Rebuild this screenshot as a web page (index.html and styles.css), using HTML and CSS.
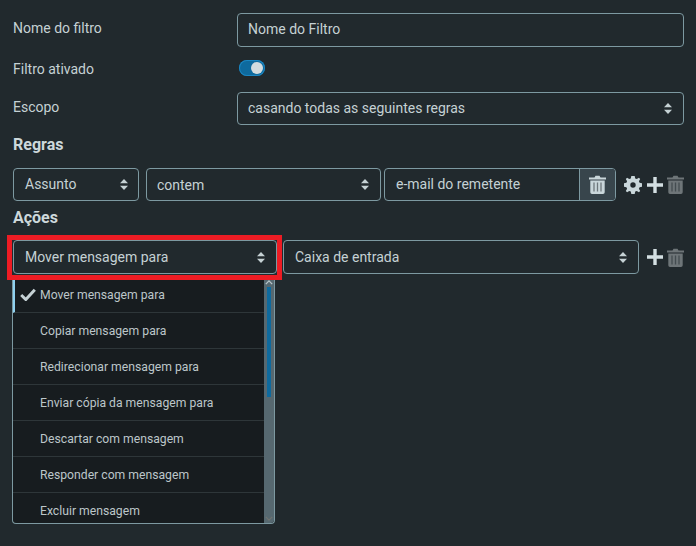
FILE: index.html
```
<!DOCTYPE html>
<html lang="pt">
<head>
<meta charset="utf-8">
<title>Filtro</title>
<link rel="stylesheet" href="styles.css">
</head>
<body>
<svg class="defs" width="0" height="0">
  <symbol id="updown" viewBox="0 0 8 11"><path d="M4 0 8 4.200H0ZM4 11 0 6.800H8Z" fill="currentColor"/></symbol>
  <symbol id="trash" viewBox="0 0 17 19"><path d="M0 2.500H5.500L6.500 .8H10.500L11.500 2.500H17V4.500H0ZM1.300 5.500H15.700V17.200Q15.700 19 14 19H3Q1.300 19 1.300 17.200Z" fill="currentColor"/><path d="M5 7.500V16.500M8.500 7.500V16.500M12 7.500V16.500" stroke="#222a2f" stroke-opacity=".55" stroke-width="1.300" fill="none"/></symbol>
  <symbol id="plus" viewBox="0 0 16 16"><path d="M6.300 0H9.700V6.300H16V9.700H9.700V16H6.300V9.700H0V6.300H6.300Z" fill="currentColor"/></symbol>
  <symbol id="gear" viewBox="0 0 18 18"><path fill-rule="evenodd" d="M7.300 0H10.700L11.200 2.400 12.800 3.100 14.900 1.800 16.200 3.100 14.900 5.200 15.600 6.800 18 7.300V10.700L15.600 11.200 14.900 12.800 16.200 14.900 14.900 16.200 12.800 14.900 11.200 15.600 10.700 18H7.300L6.800 15.600 5.200 14.900 3.100 16.200 1.800 14.900 3.100 12.800 2.400 11.200 0 10.700V7.300L2.400 6.800 3.100 5.200 1.800 3.100 3.100 1.800 5.200 3.100 6.800 2.400ZM9 6.300A2.700 2.700 0 1 0 9 11.700 2.700 2.700 0 1 0 9 6.300Z" fill="currentColor"/></symbol>
</svg>

<main class="form">
  <div class="row row-name">
    <label class="label">Nome do filtro</label>
    <div class="field field-tall">Nome do Filtro</div>
  </div>
  <div class="row row-toggle">
    <label class="label">Filtro ativado</label>
    <span class="toggle"><span class="knob"></span></span>
  </div>
  <div class="row row-scope">
    <label class="label">Escopo</label>
    <div class="field select">casando todas as seguintes regras<svg class="arrow"><use href="#updown"/></svg></div>
  </div>

  <h2 class="heading">Regras</h2>
  <div class="line">
    <div class="field select w-subject">Assunto<svg class="arrow"><use href="#updown"/></svg></div>
    <div class="field select w-op">contem<svg class="arrow"><use href="#updown"/></svg></div>
    <div class="group">
      <div class="group-text">e-mail do remetente</div>
      <div class="group-btn"><svg class="icon-trash light"><use href="#trash"/></svg></div>
    </div>
    <div class="icons">
      <svg class="icon-gear"><use href="#gear"/></svg>
      <svg class="icon-plus"><use href="#plus"/></svg>
      <svg class="icon-trash muted"><use href="#trash"/></svg>
    </div>
  </div>

  <h2 class="heading heading-actions">Ações</h2>
  <div class="line line-action">
    <div class="highlight">
      <div class="field select w-action">Mover mensagem para<svg class="arrow"><use href="#updown"/></svg></div>
    </div>
    <div class="field select w-folder">Caixa de entrada<svg class="arrow"><use href="#updown"/></svg></div>
    <div class="icons icons-action">
      <svg class="icon-plus"><use href="#plus"/></svg>
      <svg class="icon-trash muted"><use href="#trash"/></svg>
    </div>

    <div class="menu">
      <ul class="menu-list">
        <li class="menu-item active"><svg class="check" viewBox="0 0 16 13"><path d="M1.200 7 5.800 11.500 14.800 1.800" fill="none" stroke="currentColor" stroke-width="3"/></svg>Mover mensagem para</li>
        <li class="menu-item">Copiar mensagem para</li>
        <li class="menu-item">Redirecionar mensagem para</li>
        <li class="menu-item">Enviar cópia da mensagem para</li>
        <li class="menu-item">Descartar com mensagem</li>
        <li class="menu-item">Responder com mensagem</li>
        <li class="menu-item">Excluir mensagem</li>
      </ul>
      <div class="scrollbar">
        <svg class="chev" viewBox="0 0 10 6"><path d="M1 5 5 1 9 5" fill="none" stroke="#b9c6ca" stroke-width="1.600"/></svg>
        <div class="thumb"></div>
        <svg class="chev chev-down" viewBox="0 0 10 6"><path d="M1 1 5 5 9 1" fill="none" stroke="#6f7371" stroke-width="1.600"/></svg>
      </div>
    </div>
  </div>
</main>
</body>
</html>
```
FILE: styles.css
```
* { box-sizing: border-box; }
html, body { margin: 0; height: 100%; }
body {
  background: #21292d;
  color: #c5d1d4;
  font: 14px/20px Roboto, "Liberation Sans", sans-serif;
  overflow: hidden;
}
.defs { position: absolute; }
.form { padding: 13px 12px 0 13px; }
.row { display: flex; align-items: flex-start; }
.label { width: 224px; flex: none; }
.row-name { height: 47px; }
.row-name .label { padding-top: 5px; }
.row-toggle { height: 32px; }
.row-toggle .label { line-height: 18px; }
.row-scope { height: 33px; }
.row-scope .label { padding-top: 5px; }
.field {
  position: relative;
  display: flex;
  align-items: center;
  height: 33px;
  padding: 0 11px;
  border: 1px solid #7d99a1;
  border-radius: 4px;
  background: #21292d;
  white-space: nowrap;
}
.row .field { flex: 1; padding-left: 10px; padding-bottom: 1px; }
.row .field-tall { height: 34px; padding-bottom: 2px; }
.arrow {
  position: absolute;
  right: 11px;
  top: 50%;
  width: 8px;
  height: 11px;
  margin-top: -5.500px;
  color: #c5d1d4;
}
.toggle {
  display: flex;
  align-items: center;
  justify-content: flex-end;
  width: 26px;
  height: 16px;
  margin-left: 2px;
  padding-right: 2px;
  border-radius: 8px;
  background: #0e6a9e;
  box-shadow: inset 0 0 0 1px #1b86c2;
}
.knob { width: 12px; height: 12px; border-radius: 50%; background: #d3dcdf; }
.heading {
  margin: 0;
  font-size: 16px;
  font-weight: 700;
  line-height: 20px;
  color: #cdd8db;
  padding-top: 10px;
  height: 43px;
}
.heading-actions { height: 39px; padding-top: 7px; }
.line { position: relative; display: flex; gap: 7px; align-items: flex-start; height: 33px; }
.line .w-subject { width: 126px; flex: none; padding-bottom: 1px; }
.w-subject .arrow { right: 10px; }
.line .w-op { width: 235px; flex: none; margin-right: -4px; padding-left: 10px; padding-top: 1px; }
.group {
  display: flex;
  width: 232px;
  height: 33px;
  flex: none;
  border: 1px solid #7d99a1;
  border-radius: 4px;
  overflow: hidden;
}
.group-text { flex: 1; padding: 0 11px; line-height: 31px; }
.group-btn {
  display: flex;
  align-items: center;
  justify-content: center;
  width: 36px;
  border-left: 1px solid #7d99a1;
  background: #38454c;
}
.icons { display: flex; align-items: center; height: 33px; margin-left: 1px; }
.icon-trash { width: 17px; height: 19px; }
.light { color: #c9d6da; }
.muted { color: #6e7578; }
.icon-gear { width: 18px; height: 18px; color: #c9d6da; }
.icon-plus { width: 16px; height: 16px; margin: 0 4px 0 5px; color: #d4dfe2; }
.line-action { height: 34px; gap: 0; }
.highlight {
  position: relative;
  z-index: 1;
  flex: none;
  width: 275px;
  height: 45px;
  margin: -5px 0 0 -6px;
  padding-left: 1px;
  border: 5px solid #ed1c24;
}
.line-action .w-action { width: 264px; height: 34px; }
.line .w-folder { width: 356px; height: 34px; flex: none; margin-left: 1px; }
.icons-action { height: 34px; margin-left: 8px; }
.icons-action .icon-plus { margin-left: 0; }
.menu {
  position: absolute;
  left: -1px;
  top: 37px;
  display: flex;
  width: 263px;
  height: 247px;
  border: 1px solid #7d99a1;
  border-top: 0;
  border-radius: 0 0 4px 4px;
  background: #171c1f;
  overflow: hidden;
}
.menu-list { flex: 1; margin: 0; padding: 0; list-style: none; overflow: hidden; }
.menu-item {
  position: relative;
  height: 36px;
  padding-left: 27px;
  font-size: 12.200px;
  line-height: 37px;
  color: #bcc6c9;
  border-bottom: 1px solid #2e3639;
  white-space: nowrap;
}
.menu-item:last-child { border-bottom: 0; }
.menu-item.active { border-left: 2px solid #8fd0ee; padding-left: 25px; }
.check { position: absolute; left: 5px; top: 11px; width: 16px; height: 13px; color: #c5d1d4; }
.scrollbar { position: relative; width: 10px; flex: none; background: #566870; }
.thumb { position: absolute; left: 3px; top: 10px; width: 4px; height: 110px; background: #0e6a9e; }
.chev { position: absolute; left: 1px; top: 3px; width: 8px; height: 5px; }
.chev-down { top: auto; bottom: 2px; }
```
